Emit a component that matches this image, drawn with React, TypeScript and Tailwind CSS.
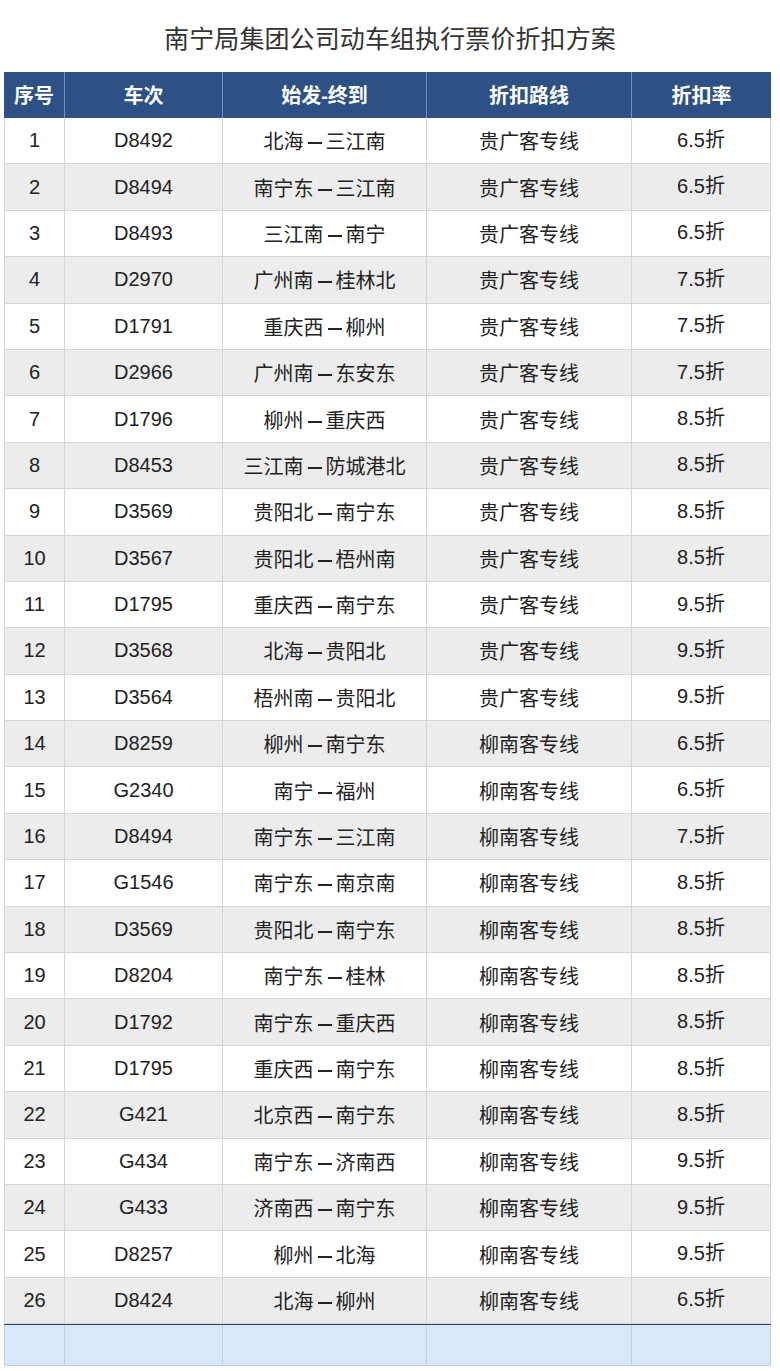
import React from "react";

const rows: [string, string, string, string, string][] = [
  ["1", "D8492", "北海—三江南", "贵广客专线", "6.5折"],
  ["2", "D8494", "南宁东—三江南", "贵广客专线", "6.5折"],
  ["3", "D8493", "三江南—南宁", "贵广客专线", "6.5折"],
  ["4", "D2970", "广州南—桂林北", "贵广客专线", "7.5折"],
  ["5", "D1791", "重庆西—柳州", "贵广客专线", "7.5折"],
  ["6", "D2966", "广州南—东安东", "贵广客专线", "7.5折"],
  ["7", "D1796", "柳州—重庆西", "贵广客专线", "8.5折"],
  ["8", "D8453", "三江南—防城港北", "贵广客专线", "8.5折"],
  ["9", "D3569", "贵阳北—南宁东", "贵广客专线", "8.5折"],
  ["10", "D3567", "贵阳北—梧州南", "贵广客专线", "8.5折"],
  ["11", "D1795", "重庆西—南宁东", "贵广客专线", "9.5折"],
  ["12", "D3568", "北海—贵阳北", "贵广客专线", "9.5折"],
  ["13", "D3564", "梧州南—贵阳北", "贵广客专线", "9.5折"],
  ["14", "D8259", "柳州—南宁东", "柳南客专线", "6.5折"],
  ["15", "G2340", "南宁—福州", "柳南客专线", "6.5折"],
  ["16", "D8494", "南宁东—三江南", "柳南客专线", "7.5折"],
  ["17", "G1546", "南宁东—南京南", "柳南客专线", "8.5折"],
  ["18", "D3569", "贵阳北—南宁东", "柳南客专线", "8.5折"],
  ["19", "D8204", "南宁东—桂林", "柳南客专线", "8.5折"],
  ["20", "D1792", "南宁东—重庆西", "柳南客专线", "8.5折"],
  ["21", "D1795", "重庆西—南宁东", "柳南客专线", "8.5折"],
  ["22", "G421", "北京西—南宁东", "柳南客专线", "8.5折"],
  ["23", "G434", "南宁东—济南西", "柳南客专线", "9.5折"],
  ["24", "G433", "济南西—南宁东", "柳南客专线", "9.5折"],
  ["25", "D8257", "柳州—北海", "柳南客专线", "9.5折"],
  ["26", "D8424", "北海—柳州", "柳南客专线", "6.5折"],
];

const headers = ["序号", "车次", "始发-终到", "折扣路线", "折扣率"];
const grid = "grid grid-cols-[61px_158px_204px_205px_139px]";

function renderRoute(s: string) {
  const [a, b] = s.split("—");
  return (
    <span className="inline-flex items-center">
      <span>{a}</span>
      <span className="inline-block w-[14px] h-[2px] bg-[#222] mx-[4px] translate-y-[1px]" />
      <span>{b}</span>
    </span>
  );
}

export default function App() {
  return (
    <div
      className="w-[780px] h-[1371px] bg-white overflow-hidden"
      style={{ fontFamily: '"Liberation Sans", "Noto Sans CJK SC", sans-serif' }}
    >
      <div className="h-[72px] flex items-center justify-center pt-[6px]">
        <h1 className="text-[25px] text-[#333] font-normal tracking-[0.1px] leading-none">
          南宁局集团公司动车组执行票价折扣方案
        </h1>
      </div>
      <div className="ml-[4px] w-[767px]">
        <div className={`${grid} h-[46px] bg-[#2d5185]`}>
          {headers.map((h, i) => (
            <div
              key={h}
              className={`flex items-center justify-center text-white font-bold text-[20px] pt-[1px] ${
                i < headers.length - 1 ? "border-r border-[#7690b5]" : ""
              }`}
            >
              {h}
            </div>
          ))}
        </div>
        {rows.map((r, ri) => (
          <div
            key={ri}
            className={`${grid} h-[46.4px] ${ri % 2 === 1 ? "bg-[#ececec]" : "bg-white"}`}
          >
            {r.map((c, ci) => (
              <div
                key={ci}
                className={`flex items-center justify-center text-[20px] text-[#222] border-b border-r border-[#d6d6d6] ${
                  ci === 0 ? "border-l" : ""
                } ${ci <= 1 ? "pb-[1px]" : ci === 4 ? "pb-[2px]" : "pt-[3px]"}`}
              >
                {ci === 2 ? renderRoute(c) : c}
              </div>
            ))}
          </div>
        ))}
        <div className={`${grid} h-[43px] bg-[#d7e8fb] border-t-2 border-[#3b4754] -mt-[1px]`}>
          {headers.map((h, i) => (
            <div
              key={h}
              className={`border-r border-b border-[#c3d0dd] ${i === 0 ? "border-l" : ""}`}
            />
          ))}
        </div>
      </div>
    </div>
  );
}
